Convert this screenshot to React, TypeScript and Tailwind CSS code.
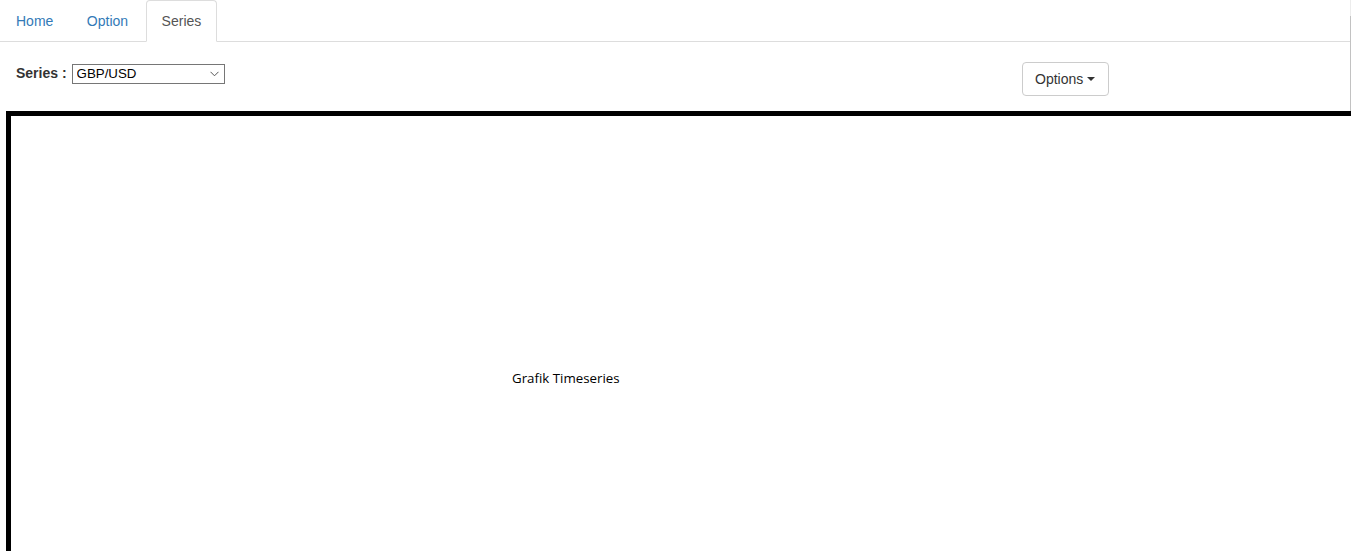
import { useState } from "react"

const tabs = ["Home", "Option", "Series"]

export default function App() {
  const [active, setActive] = useState("Series")
  const [series, setSeries] = useState("GBP/USD")

  return (
    <div className="w-[1351px] h-[551px] overflow-hidden bg-white text-[#333] font-['Liberation_Sans',Arial,sans-serif] text-[14px]">
      <div className="flex">
        <div className="w-[1350px]">
          {/* tabs */}
          <ul className="flex border-b border-[#ddd] h-[42px]">
            {tabs.map((t) => (
              <li key={t} className="mr-[1.5px] -mb-px">
                <a
                  href="#"
                  onClick={(e) => {
                    e.preventDefault()
                    setActive(t)
                  }}
                  className={
                    active === t
                      ? "block px-[15px] py-[10px] leading-[20px] border border-[#ddd] border-b-transparent rounded-t-[4px] bg-white text-[#555]"
                      : "block px-[15px] py-[10px] leading-[20px] border border-transparent text-[#337ab7]"
                  }
                >
                  {t}
                </a>
              </li>
            ))}
          </ul>

          {/* controls */}
          <div className="flex items-start pl-4 pt-[20px] pb-[15px]">
            <div className="w-[1006px] flex items-center pt-[1px]">
              <label className="font-bold mr-[5px] leading-[20px]">Series :</label>
              <div className="relative w-[153px] h-[20px]">
                <select
                  value={series}
                  onChange={(e) => setSeries(e.target.value)}
                  className="appearance-none w-full h-full border border-[#767676] bg-white pl-[4px] pr-5 text-[13.3px] leading-[18px] text-black outline-none"
                >
                  <option>GBP/USD</option>
                  <option>EUR/USD</option>
                  <option>USD/JPY</option>
                </select>
                <svg
                  className="pointer-events-none absolute right-[6px] top-[8px]"
                  width="9"
                  height="6"
                  viewBox="0 0 9 6"
                  fill="none"
                  stroke="#555"
                  strokeWidth="1"
                >
                  <path d="M0.5 0.8 L4.5 4.8 L8.5 0.8" />
                </svg>
              </div>
            </div>
            <button className="flex items-center h-[34px] pl-[12px] pr-[13px] border border-[#ccc] rounded-[4px] bg-white text-[#333] leading-[20px]">
              Options
              <span className="ml-[4px] w-0 h-0 border-x-[4px] border-x-transparent border-t-[4px] border-t-[#333]" />
            </button>
          </div>
        </div>
        <div className="w-px flex flex-col">
          <div className="h-[16px] bg-[#ececec]" />
          <div className="flex-1 bg-[#c2c2c2]" />
        </div>
      </div>

      {/* chart area */}
      <div className="ml-[6px] w-[1500px] h-[700px] border-[5px] border-black">
        <div className="pl-[501px] pt-[253px] font-['Open_Sans',sans-serif] text-[13.3px] leading-[18px] text-black">
          Grafik Timeseries
        </div>
      </div>
    </div>
  )
}
